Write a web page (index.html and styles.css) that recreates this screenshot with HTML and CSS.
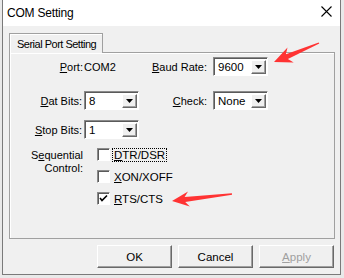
FILE: index.html
```html
<!DOCTYPE html>
<html lang="en">
<head>
  <meta charset="UTF-8">
  <title>COM Setting</title>
  <link rel="stylesheet" href="styles.css">
</head>
<body>
  <div class="dialog">
    <!-- title bar -->
    <div class="titlebar">
      <span class="title">COM Setting</span>
      <svg class="close" width="11" height="11" viewBox="0 0 11 11">
        <path d="M0.5 0.5 L10.5 10.5 M10.5 0.5 L0.5 10.5" stroke="#000" stroke-width="1.1" fill="none"/>
      </svg>
    </div>

    <div class="client">
      <div class="tabs">
        <div class="tab">Serial Port Setting</div>
      </div>

      <div class="panel">
        <div class="row first">
          <span class="lbl lbl-port"><u>P</u>ort:</span>
          <span class="val">COM2</span>
          <span class="lbl lbl2"><u>B</u>aud Rate:</span>
          <div class="combo"><span class="combo-text">9600</span><span class="combo-btn"><i class="tri"></i></span></div>
        </div>
        <div class="row second">
          <span class="lbl"><u>D</u>at Bits:</span>
          <div class="combo"><span class="combo-text">8</span><span class="combo-btn"><i class="tri"></i></span></div>
          <span class="lbl lbl2"><u>C</u>heck:</span>
          <div class="combo"><span class="combo-text">None</span><span class="combo-btn"><i class="tri"></i></span></div>
        </div>
        <div class="row third">
          <span class="lbl"><u>S</u>top Bits:</span>
          <div class="combo"><span class="combo-text">1</span><span class="combo-btn"><i class="tri"></i></span></div>
        </div>

        <div class="seq">
          <div class="seq-lbl">S<u>e</u>quential<br>Control:</div>
          <div class="checks">
            <div class="check">
              <span class="box"></span>
              <span class="check-text focus"><u>D</u>TR/DSR</span>
            </div>
            <div class="check">
              <span class="box"></span>
              <span class="check-text"><u>X</u>ON/XOFF</span>
            </div>
            <div class="check">
              <span class="box">
                <svg width="9" height="9" viewBox="0 0 9 9"><path d="M1 4 L3 6.5 L8 1.5" stroke="#000" stroke-width="1.6" fill="none"/></svg>
              </span>
              <span class="check-text"><u>R</u>TS/CTS</span>
            </div>
          </div>
        </div>
      </div>

      <div class="buttons">
        <div class="btn">OK</div>
        <div class="btn">Cancel</div>
        <div class="btn disabled"><u>A</u>pply</div>
      </div>
    </div>
  </div>

  <!-- red annotation arrows -->
  <svg class="arrows" width="344" height="278" viewBox="0 0 344 278">
    <polygon fill="#ff3333" points="274,62 287.5,47.6 285.9,54.3 318.7,42.4 319.3,43.6 287.9,58.9 293.7,62.4"/>
    <polygon fill="#ff3333" points="172,201 188,191.6 184.6,197 231.9,193.3 232.1,194.7 185.2,202 189.8,206.5"/>
  </svg>
</body>
</html>
```

FILE: styles.css
```css
body {
  margin: 0;
  width: 344px;
  height: 278px;
  position: relative;
  overflow: hidden;
  background: #e9e9e9;
  font-family: 'Liberation Sans', Arial, sans-serif;
  font-size: 11px;
  color: #000;
}
u {
  text-decoration: underline;
  text-underline-offset: 1px;
}
.dialog {
  margin-left: 2px;
  width: 339px;
  height: 275px;
  box-sizing: border-box;
  border: 1px solid #7a7a7a;
  border-top: none;
  background: #f0f0f0;
  display: flex;
  flex-direction: column;
}
.titlebar {
  height: 26px;
  background: #fff;
  display: flex;
  align-items: center;
  justify-content: space-between;
  padding: 0 8px 0 4px;
}
.title {
  font-size: 12px;
  letter-spacing: -0.2px;
  margin-top: -1px;
}
.close {
  margin-top: -4px;
}
.client {
  padding: 7px 5px 0 6px;
}
.tabs {
  display: flex;
}
.tab {
  position: relative;
  z-index: 1;
  height: 20px;
  padding: 0 6px 0 7px;
  box-sizing: border-box;
  border: 1px solid #a0a0a0;
  border-bottom: none;
  box-shadow: inset 1px 1px 0 #fff;
  background: #f0f0f0;
  margin-bottom: -1px;
  line-height: 20px;
  font-size: 11px;
  letter-spacing: -0.5px;
}
.panel {
  height: 187px;
  box-sizing: border-box;
  border: 1px solid #a0a0a0;
  box-shadow: inset 1px 1px 0 #fff;
  padding-top: 4px;
}
.row {
  display: grid;
  grid-template-columns: 74px 55px 74px 55px;
  align-items: center;
  height: 19px;
}
.row.second {
  margin-top: 15px;
}
.row.third {
  margin-top: 10px;
}
.lbl {
  text-align: right;
  padding-right: 2px;
}
.lbl-port {
  padding-right: 1px;
}
.lbl2 {
  padding-right: 6px;
}
.combo {
  height: 19px;
  box-sizing: border-box;
  border: 1px solid;
  border-color: #8a8a8a #fff #fff #8a8a8a;
  box-shadow: inset 1px 1px 0 #5a5a5a;
  background: #fff;
  display: flex;
  align-items: center;
  padding: 2px 1px 1px 2px;
}
.combo-text {
  flex: 1;
  padding-left: 2px;
  font-size: 11.5px;
}
.combo-btn {
  width: 15px;
  height: 14px;
  box-sizing: border-box;
  border: 1px solid;
  border-color: #fff #696969 #696969 #fff;
  box-shadow: inset -1px -1px 0 #a0a0a0;
  background: #f0f0f0;
  display: flex;
  align-items: center;
  justify-content: center;
}
.tri {
  display: block;
  width: 7px;
  height: 4px;
  background: #000;
  clip-path: polygon(0 0, 100% 0, 50% 100%);
}
.seq {
  display: flex;
  margin-top: 5px;
}
.seq-lbl {
  width: 73px;
  padding-right: 1px;
  text-align: right;
  line-height: 13px;
  padding-top: 5px;
}
.checks {
  display: flex;
  flex-direction: column;
  gap: 1px;
  margin-left: 13px;
}
.check {
  display: flex;
  align-items: center;
  height: 21px;
}
.box {
  width: 13px;
  height: 13px;
  box-sizing: border-box;
  border: 1px solid;
  border-color: #8a8a8a #fff #fff #8a8a8a;
  box-shadow: inset 1px 1px 0 #5a5a5a;
  background: #fff;
  display: flex;
  align-items: center;
  justify-content: center;
}
.check-text {
  margin-left: 3px;
  padding: 0 1px;
  font-size: 11.5px;
  line-height: 12px;
}
.focus {
  outline: 1px dotted #000;
}
.buttons {
  display: flex;
  justify-content: flex-end;
  gap: 6px;
  margin-top: 6px;
  padding-right: 1px;
}
.btn {
  width: 75px;
  height: 23px;
  box-sizing: border-box;
  border: 1px solid;
  border-color: #fff #696969 #696969 #fff;
  box-shadow: inset -1px -1px 0 #a0a0a0;
  background: #f0f0f0;
  display: flex;
  align-items: center;
  justify-content: center;
  font-size: 11.5px;
}
.btn.disabled {
  color: #a0a0a0;
}
.arrows {
  position: absolute;
  left: 0;
  top: 0;
  pointer-events: none;
}
```
